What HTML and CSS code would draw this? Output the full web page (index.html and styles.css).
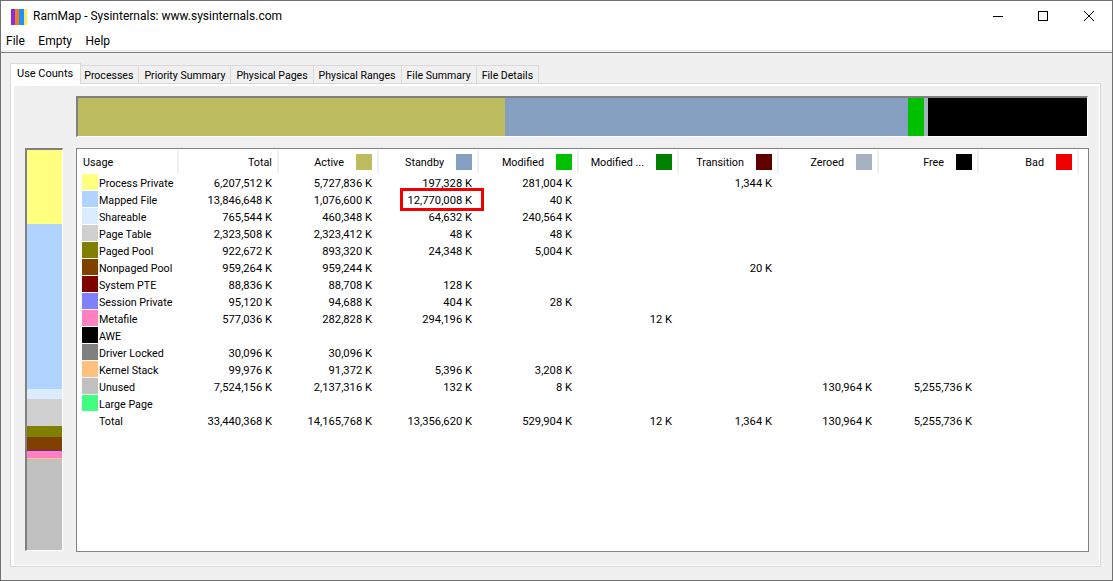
FILE: index.html
```html
<!DOCTYPE html>
<html lang="en">
<head>
<meta charset="utf-8">
<title>RamMap</title>
<link rel="stylesheet" href="styles.css">
</head>
<body>
<div class="window">
  <header class="titlebar">
    <svg class="appicon" width="16" height="16" viewBox="0 0 16 16"><rect x="0" y="0" width="4" height="16" fill="#8a2be2"/><rect x="4" y="0" width="4" height="16" fill="#f47b16"/><rect x="8" y="0" width="5" height="16" fill="#1e90ff"/><rect x="13" y="0" width="3" height="16" fill="#ffe96a"/></svg>
    <span class="title">RamMap - Sysinternals: www.sysinternals.com</span>
    <div class="controls">
      <svg width="46" height="29" viewBox="0 0 46 29"><path d="M19 15.500h10" stroke="#000" fill="none"/></svg>
      <svg width="46" height="29" viewBox="0 0 46 29"><rect x="18.500" y="10.500" width="9" height="9" stroke="#000" fill="none"/></svg>
      <svg width="46" height="29" viewBox="0 0 46 29"><path d="M18 10l10 10M28 10l-10 10" stroke="#000" fill="none"/></svg>
    </div>
  </header>
  <nav class="menubar"><span>File</span><span>Empty</span><span>Help</span></nav>
  <main class="client">
    <div class="tabs">
      <span class="tab active">Use Counts</span>
      <span class="tab">Processes</span>
      <span class="tab">Priority Summary</span>
      <span class="tab">Physical Pages</span>
      <span class="tab">Physical Ranges</span>
      <span class="tab">File Summary</span>
      <span class="tab">File Details</span>
    </div>
    <section class="panel">
      <div class="hbar">
        <i class="c-active" style="width:427px"></i><i class="c-standby" style="width:403px"></i><i class="c-mod" style="width:16px"></i><i class="c-zero" style="width:4px"></i><i class="c-free" style="flex:1"></i>
      </div>
      <div class="lower">
        <div class="vbar">
          <i style="height:74px;background:#ffff80"></i>
          <i style="height:165px;background:#b0d4ff"></i>
          <i style="height:10px;background:#dcecff"></i>
          <i style="height:27px;background:#d0d0d0"></i>
          <i style="height:11px;background:#808000"></i>
          <i style="height:12.500px;background:#804000"></i>
          <i style="height:1px;background:#6a2a80"></i>
          <i style="height:7px;background:#ff80c0"></i>
          <i style="height:1px;background:#ffc080"></i>
          <i style="flex:1;background:#c0c0c0"></i>
        </div>
        <div class="table">
          <div class="row head">
            <div class="hc left">Usage</div>
            <div class="hc">Total</div>
            <div class="hc">Active<b class="c-active"></b></div>
            <div class="hc">Standby<b class="c-standby"></b></div>
            <div class="hc">Modified<b class="c-mod"></b></div>
            <div class="hc">Modified ...<b class="c-modnw"></b></div>
            <div class="hc">Transition<b class="c-trans"></b></div>
            <div class="hc">Zeroed<b class="c-zero"></b></div>
            <div class="hc">Free<b class="c-free"></b></div>
            <div class="hc">Bad<b class="c-bad"></b></div>
          </div>
          <div class="row"><div class="lab"><b style="background:#ffff80"></b>Process Private</div><span>6,207,512 K</span><span>5,727,836 K</span><span>197,328 K</span><span>281,004 K</span><span></span><span>1,344 K</span><span></span><span></span><span></span></div>
          <div class="row"><div class="lab"><b style="background:#b0d4ff"></b>Mapped File</div><span>13,846,648 K</span><span>1,076,600 K</span><span class="hl">12,770,008 K</span><span>40 K</span><span></span><span></span><span></span><span></span><span></span></div>
          <div class="row"><div class="lab"><b style="background:#dcecff"></b>Shareable</div><span>765,544 K</span><span>460,348 K</span><span>64,632 K</span><span>240,564 K</span><span></span><span></span><span></span><span></span><span></span></div>
          <div class="row"><div class="lab"><b style="background:#d0d0d0"></b>Page Table</div><span>2,323,508 K</span><span>2,323,412 K</span><span>48 K</span><span>48 K</span><span></span><span></span><span></span><span></span><span></span></div>
          <div class="row"><div class="lab"><b style="background:#808000"></b>Paged Pool</div><span>922,672 K</span><span>893,320 K</span><span>24,348 K</span><span>5,004 K</span><span></span><span></span><span></span><span></span><span></span></div>
          <div class="row"><div class="lab"><b style="background:#804000"></b>Nonpaged Pool</div><span>959,264 K</span><span>959,244 K</span><span></span><span></span><span></span><span>20 K</span><span></span><span></span><span></span></div>
          <div class="row"><div class="lab"><b style="background:#800000"></b>System PTE</div><span>88,836 K</span><span>88,708 K</span><span>128 K</span><span></span><span></span><span></span><span></span><span></span><span></span></div>
          <div class="row"><div class="lab"><b style="background:#8080ff"></b>Session Private</div><span>95,120 K</span><span>94,688 K</span><span>404 K</span><span>28 K</span><span></span><span></span><span></span><span></span><span></span></div>
          <div class="row"><div class="lab"><b style="background:#ff80c0"></b>Metafile</div><span>577,036 K</span><span>282,828 K</span><span>294,196 K</span><span></span><span>12 K</span><span></span><span></span><span></span><span></span></div>
          <div class="row"><div class="lab"><b style="background:#000"></b>AWE</div><span></span><span></span><span></span><span></span><span></span><span></span><span></span><span></span><span></span></div>
          <div class="row"><div class="lab"><b style="background:#808080"></b>Driver Locked</div><span>30,096 K</span><span>30,096 K</span><span></span><span></span><span></span><span></span><span></span><span></span><span></span></div>
          <div class="row"><div class="lab"><b style="background:#ffc080"></b>Kernel Stack</div><span>99,976 K</span><span>91,372 K</span><span>5,396 K</span><span>3,208 K</span><span></span><span></span><span></span><span></span><span></span></div>
          <div class="row"><div class="lab"><b style="background:#c0c0c0"></b>Unused</div><span>7,524,156 K</span><span>2,137,316 K</span><span>132 K</span><span>8 K</span><span></span><span></span><span>130,964 K</span><span>5,255,736 K</span><span></span></div>
          <div class="row"><div class="lab"><b style="background:#40ff80"></b>Large Page</div><span></span><span></span><span></span><span></span><span></span><span></span><span></span><span></span><span></span></div>
          <div class="row"><div class="lab"><b></b>Total</div><span>33,440,368 K</span><span>14,165,768 K</span><span>13,356,620 K</span><span>529,904 K</span><span>12 K</span><span>1,364 K</span><span>130,964 K</span><span>5,255,736 K</span><span></span></div>
        </div>
      </div>
    </section>
  </main>
</div>
</body>
</html>
```
FILE: styles.css
```css
* { box-sizing: border-box; }
html, body { margin: 0; padding: 0; height: 100%; overflow: hidden; }
body { font-family: Roboto, "Noto Sans", sans-serif; font-size: 11.2px; color: #000; background: #fff; }
.window { height: 581px; width: 1113px; display: flex; flex-direction: column; border: 1px solid #707070; background: #fff; }
.titlebar { height: 29px; display: flex; align-items: center; padding-left: 10px; background: #fff; flex: none; }
.appicon { margin-right: 6px; margin-top: 2px; }
.title { font-size: 12px; margin-top: 1px; }
.controls { margin-left: auto; display: flex; }
.controls svg { display: block; }
.menubar { height: 22px; display: flex; align-items: center; gap: 13.500px; padding-left: 5px; padding-top: 2px; font-size: 12px; flex: none; border-bottom: 2px solid #f0f0f0; }
.client { flex: 1; background: #f0f0f0; border-top: 1px solid #808080; padding: 10px 11px 13px 9px; display: flex; flex-direction: column; min-height: 0; }
.tabs { display: flex; align-items: flex-end; height: 20px; position: relative; z-index: 1; flex: none; font-size: 10.550px; }
.tab { height: 18px; padding: 0 5px; line-height: 19px; border: 1px solid #d9d9d9; border-bottom: none; border-left: none; background: #f0f0f0; white-space: nowrap; }
.tab.active { height: 21px; margin-bottom: -1px; background: #fff; border-left: 1px solid #d9d9d9; padding: 0 7px 0 6px; line-height: 19px; font-size: 11px; }
.tab.active + .tab { padding-left: 3px; }
.panel { flex: 1; background: #f0f0f0; border: 1px solid #d9d9d9; box-shadow: inset 3px 2px 0 #fff, inset -1px -1px 0 #fff; padding: 12px 11px 14px 14px; display: flex; flex-direction: column; min-height: 0; }
.hbar { margin-left: 51px; width: 1012px; height: 41px; flex: none; display: flex; border: 1px solid #fff; border-top: 2px solid #808080; border-left: 2px solid #808080; }
.hbar i { display: block; height: 100%; }
.lower { flex: 1; display: flex; margin-top: 11px; min-height: 0; }
.vbar { width: 38px; margin-bottom: 1px; display: flex; flex-direction: column; border: 1px solid #fff; border-top: 2px solid #808080; border-left: 2px solid #808080; }
.vbar i { display: block; flex: none; }
.vbar i:last-child { flex: 1; }
.table { margin-left: 13px; width: 1013px; border: 1px solid #82828c; background: #fff; position: relative; }
.row { display: grid; grid-template-columns: 102px repeat(9, 100px); grid-template-rows: 17px; height: 17px; line-height: 19px; white-space: nowrap; }
.row > span { text-align: right; padding-right: 7px; }
.row.head { height: 25px; padding-top: 1px; grid-template-rows: 24px; line-height: 17px; font-size: 10.800px; }
.hc { display: flex; justify-content: flex-end; align-items: center; gap: 12px; padding-right: 5px; height: 24px; border-right: 2px solid #f0f0f0; }
.hc.left { justify-content: flex-start; padding-left: 6px; }
.hc b { width: 16px; height: 16px; display: block; }
.lab { display: flex; align-items: flex-start; padding-left: 5px; gap: 1px; font-size: 10.700px; }
.lab b { width: 16px; height: 16px; display: block; flex: none; }
.c-active { background: #bdbd60; }
.c-standby { background: #849fbf; }
.c-mod { background: #00c000; }
.c-modnw { background: #008000; }
.c-trans { background: #600000; }
.c-zero { background: #a6b2bd; }
.c-free { background: #000; }
.c-bad { background: #f00000; }
.hl { position: relative; }
.hl::after { content: ""; position: absolute; left: 21px; right: -5px; top: -3px; bottom: -3px; border: 3px solid #f00000; }
```
